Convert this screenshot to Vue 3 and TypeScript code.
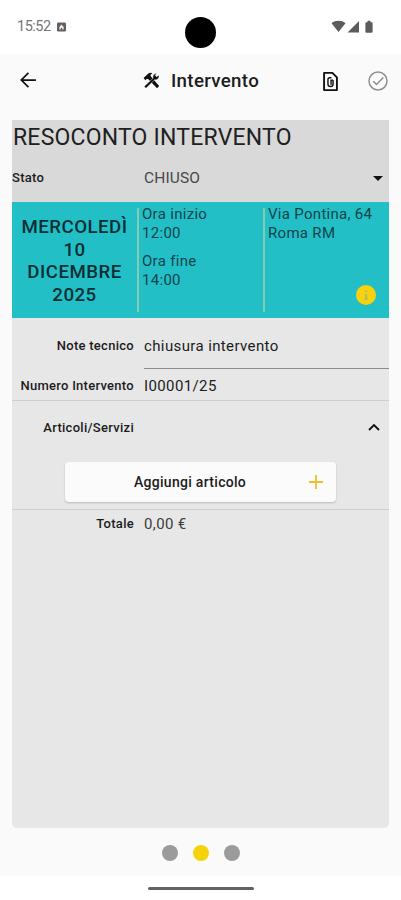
<script setup lang="ts">
import { ref } from 'vue'

interface Slot {
  label: string
  time: string
}

const slots: Slot[] = [
  { label: 'Ora inizio', time: '12:00' },
  { label: 'Ora fine', time: '14:00' },
]
const dateLines: string[] = ['MERCOLEDÌ', '10', 'DICEMBRE', '2025']
const address: string[] = ['Via Pontina, 64', 'Roma RM']
const pages: number[] = [0, 1, 2]
const activePage = ref<number>(1)
</script>

<template>
  <div class="phone">
    <div class="status-bar">
      <span class="clock">15:52</span>
      <svg class="notif" viewBox="0 0 10 10"><rect width="10" height="10" rx="1.5" fill="#606060" /><path d="M2.600 7.800V5L5 2.200 7.400 5v2.800H5.800V6H4.200v1.800z" fill="#ececec" /></svg>
      <span class="camera"></span>
      <svg class="signals" viewBox="0 0 44 14">
        <path d="M0.500 3.200C4.500 0 10.500 0 14.500 3.200L7.500 12z" fill="#5c5c5c" />
        <path d="M28 1v11.500H16.500z" fill="#5c5c5c" />
        <path d="M35.200 2.200h1.300V.8h3v1.400h1.300c.5 0 .8.300.8.800v8.900c0 .5-.3.800-.8.800h-5.600c-.5 0-.8-.3-.8-.800V3c0-.5.300-.8.800-.8z" fill="#5c5c5c" />
      </svg>
    </div>

    <header class="app-bar">
      <svg class="back" viewBox="0 0 24 24"><path d="M21.500 12H4M12.500 3.500L4 12l8.500 8.500" fill="none" stroke="#111" stroke-width="2.100" /></svg>
      <div class="title">
        <svg class="tools" viewBox="0 0 24 24">
          <path d="M0.800 8.500L7.500 2.200C9.500.8 11.800.9 13.200 1.900L10.400 4.200 11.200 6.400 22.800 19.800 19.800 22.800 7.600 10.200 5.600 9.500 3.400 11.600z" />
          <path d="M1.500 20.300L14.200 8.800C13.300 5.200 15.600 1.900 19.500 1.800L17.300 4.700 19 6.800 22.400 4.600C23.300 8.600 20.300 11.500 16.500 10.900L4.300 23z" stroke="#fafafa" stroke-width=".6" />
        </svg>
        <h1>Intervento</h1>
      </div>
      <div class="actions">
        <svg class="doc" viewBox="0 0 18 22">
          <path d="M2.200 1.900H11L15.800 6.700V20.100H2.200z" fill="none" stroke="#111" stroke-width="2" stroke-linejoin="round" />
          <path d="M11.700 9.500H9.600V14.500M10 7H8.200C7 7 6.300 7.800 6.300 9v4.600c0 3.700 5.400 3.700 5.400 0V9.500" fill="none" stroke="#111" stroke-width="1.500" />
        </svg>
        <svg class="check" viewBox="0 0 20 20"><circle cx="10" cy="10" r="9" /><path d="M5.200 10.200l3.300 3.300 6.800-7" /></svg>
      </div>
    </header>

    <main class="sheet">
      <section class="summary">
        <h2>RESOCONTO INTERVENTO</h2>
        <div class="state">
          <span class="label state-label">Stato</span>
          <span class="state-value">CHIUSO</span>
          <span class="caret"></span>
        </div>
      </section>

      <section class="visit">
        <div class="date"><span v-for="line in dateLines" :key="line">{{ line }}</span></div>
        <div class="hours">
          <div v-for="slot in slots" :key="slot.label" class="slot">
            <span>{{ slot.label }}</span><span>{{ slot.time }}</span>
          </div>
        </div>
        <div class="place">
          <span v-for="line in address" :key="line">{{ line }}</span>
          <svg class="info" viewBox="0 0 20 20"><circle cx="10" cy="10" r="10" fill="#f8d20c" /><path d="M9 5.600h2.200v2H9zM8.400 9h2.800v4.500h.8v1.200H8.200v-1.200H9V10h-.6z" fill="#b3bf67" /></svg>
        </div>
      </section>

      <div class="row note">
        <span class="label">Note tecnico</span>
        <span class="value field">chiusura intervento</span>
      </div>
      <div class="row number">
        <span class="label">Numero Intervento</span>
        <span class="value">I00001/25</span>
      </div>
      <div class="row items">
        <span class="label">Articoli/Servizi</span>
        <svg class="chevron" viewBox="0 0 12 8"><path d="M1 7l5-5 5 5" fill="none" stroke="#111" stroke-width="1.800" /></svg>
      </div>
      <div class="add-row">
        <button class="add" type="button">
          <span>Aggiungi articolo</span>
          <svg class="plus" viewBox="0 0 14 14"><path d="M7 0v14M0 7h14" stroke="#f2bd2c" stroke-width="1.800" /></svg>
        </button>
      </div>
      <div class="row total">
        <span class="label">Totale</span>
        <span class="value amount">0,00 €</span>
      </div>
    </main>

    <nav class="pager">
      <span v-for="p in pages" :key="p" class="dot" :class="{ active: p === activePage }" @click="activePage = p"></span>
    </nav>
    <div class="gesture"><span></span></div>
  </div>
</template>

<style>
body { margin: 0; background: #fff; }
</style>

<style scoped>
.phone { width: 401px; height: 900px; display: flex; flex-direction: column; background: #fafafa; color: #1c1c1c; font-family: Roboto, "Noto Sans", sans-serif; overflow: hidden; }
.phone * { box-sizing: border-box; }
svg { display: block; flex: none; }
.status-bar { height: 54px; flex: none; display: grid; grid-template-columns: 40px 128px 1fr 44px; align-items: start; background: #fff; padding: 0 26px 0 17px; }
.clock { font-size: 14.500px; line-height: 18px; letter-spacing: -.5px; color: #757575; margin-top: 18px; }
.notif { width: 9px; height: 10px; margin-top: 22px; }
.camera { width: 31px; height: 31px; border-radius: 50%; background: #000; margin-top: 17px; }
.signals { width: 44px; height: 14px; margin-top: 20px; }
.app-bar { height: 66px; flex: none; display: grid; grid-template-columns: 125px 1fr 66px; align-items: start; padding: 0 13px 0 18px; }
.back { width: 20px; height: 20px; margin-top: 16px; }
.title { display: flex; align-items: center; gap: 11px; height: 54px; }
.tools { width: 17px; height: 17px; fill: #111; transform: translateY(-1px); }
h1 { margin: 0; font-size: 18.700px; font-weight: 500; line-height: 24px; letter-spacing: .32px; }
.actions { display: flex; justify-content: space-between; align-items: center; height: 54px; }
.doc { width: 17px; height: 21px; }
.check { width: 20px; height: 20px; fill: none; stroke: #8f8f8f; stroke-width: 1.500; }
.sheet { height: 708px; flex: none; margin: 0 12px; background: #e7e7e7; border-radius: 0 0 5px 5px; overflow: hidden; }
.summary { height: 82px; background: #d9d9d9; }
h2 { margin: 0; padding-left: 1px; height: 34px; font-size: 23px; font-weight: 400; line-height: 35px; letter-spacing: .2px; white-space: nowrap; color: #202020; }
.state { height: 48px; display: grid; grid-template-columns: 132px 1fr 10px; align-items: center; padding-right: 6px; }
.label { font-size: 13px; font-weight: 500; line-height: 18px; letter-spacing: .28px; text-align: right; white-space: nowrap; }
.state-label { text-align: left; }
.state-value { font-size: 15.500px; letter-spacing: .15px; color: #484848; }
.caret { border: 5px solid transparent; border-top-color: #111; border-bottom: 0; }
.visit { height: 116px; background: #23bfc7; display: grid; grid-template-columns: 125px 126px 1fr; padding: 6px 0; }
.date { display: flex; flex-direction: column; align-items: center; padding-top: 8px; font-size: 18.700px; font-weight: 500; line-height: 22.500px; letter-spacing: .45px; color: #082f34; }
.hours, .place { border-left: 2px solid #83cbb1; font-size: 15px; line-height: 18.500px; letter-spacing: .3px; color: #12444a; display: flex; flex-direction: column; white-space: nowrap; }
.hours { gap: 10px; padding-left: 3px; }
.slot { display: flex; flex-direction: column; }
.slot:first-child, .place span:first-child { margin-top: -3px; }
.place { padding-left: 3px; }
.info { width: 20px; height: 20px; margin: auto 13px 7px auto; }
.row { display: grid; grid-template-columns: 122px 1fr; column-gap: 10px; align-items: center; }
.value { font-size: 15px; font-weight: 400; letter-spacing: .38px; }
.note { height: 51px; align-items: start; }
.note .label { margin-top: 19px; }
.field { height: 51px; padding-top: 18px; line-height: 20px; border-bottom: 1px solid #8c8c8c; }
.number { height: 32px; padding-top: 2px; border-bottom: 1px solid #cfcfcf; }
.items { height: 54px; }
.chevron { width: 12px; height: 8px; justify-self: end; margin: 0 9px 2px 0; }
.add-row { height: 55px; padding: 7px 53px 0; border-bottom: 1px solid #cecece; }
.add { width: 271px; height: 40px; border: 0; border-radius: 4px; background: #fbfbfb; box-shadow: 0 1px 2px #0003; display: grid; grid-template-columns: 250px 14px; align-items: center; padding: 0; font: 500 14px/20px Roboto, sans-serif; letter-spacing: .3px; color: #1c1c1c; }
.plus { width: 14px; height: 14px; margin-left: -6px; }
.total { height: 28px; }
.amount { color: #3c3c3c; }
.pager { height: 48px; flex: none; display: flex; justify-content: center; align-items: center; gap: 15px; padding-top: 2px; }
.dot { width: 16px; height: 16px; border-radius: 50%; background: #9b9b9b; }
.dot.active { background: #f5d30b; }
.gesture { flex: 1; background: #fff; display: flex; justify-content: center; padding-top: 11px; }
.gesture span { width: 106px; height: 3px; border-radius: 2px; background: #626262; }
</style>
